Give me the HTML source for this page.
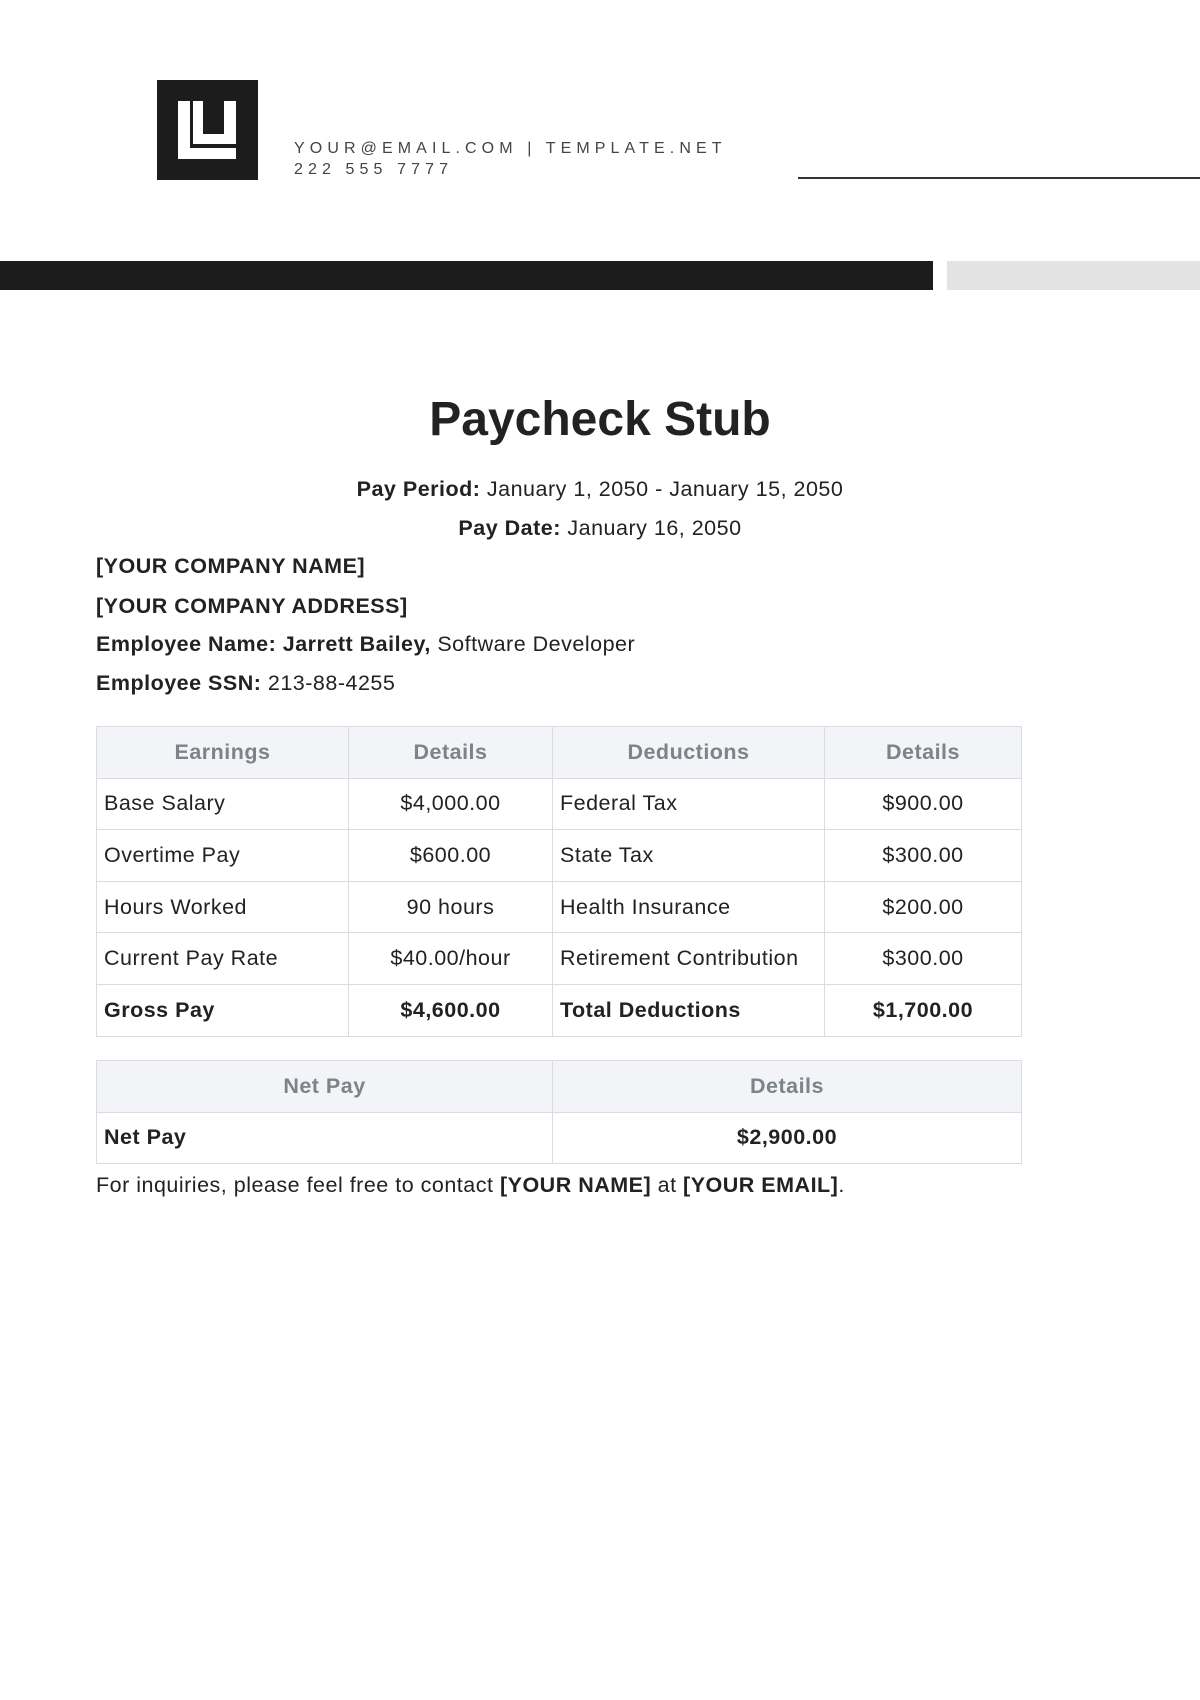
<!DOCTYPE html>
<html><head><meta charset="utf-8"><style>
*{margin:0;padding:0;box-sizing:border-box}
body{width:1200px;height:1700px;background:#fff;font-family:"Liberation Sans",sans-serif;color:#222;position:relative;overflow:hidden}
.abs{position:absolute}
.logo{left:157px;top:80px;width:101px;height:100px;background:#1c1c1c}
.contact{left:294px;top:138px;font-size:16px;letter-spacing:5.1px;color:#444;line-height:21px}
.hline{left:798px;top:177px;width:402px;height:1.5px;background:#333}
.bar1{left:0;top:261px;width:933px;height:29px;background:#1c1c1c}
.bar2{left:947px;top:261px;width:253px;height:29px;background:#e3e3e3}
h1{position:absolute;left:0;width:1200px;top:392px;text-align:center;font-size:48px;font-weight:bold;color:#222}
.c{position:absolute;left:0;width:1200px;text-align:center;font-size:21.5px;letter-spacing:0.5px}
.l{position:absolute;left:96px;font-size:21.5px;letter-spacing:0.5px}
table{position:absolute;left:96px;width:926px;border-collapse:collapse;font-size:21.5px;letter-spacing:0.5px}
td,th{border:1px solid #dcdcdc;height:51.6px;padding:0 7px}
th{background:#f3f4f8;color:#7c8389;font-weight:bold;text-align:center}
td.n{text-align:center}
</style></head><body>
<div class="abs logo"><svg width="101" height="100" viewBox="0 0 101 100"><path d="M21 21h12v47h46v11H21z" fill="#fff"/><path d="M36 21h10v33h21V21h12v43H36z" fill="#fff"/></svg></div>
<div class="abs contact">YOUR@EMAIL.COM | TEMPLATE.NET<br>222 555 7777</div>
<div class="abs hline"></div>
<div class="abs bar1"></div><div class="abs bar2"></div>
<h1>Paycheck Stub</h1>
<div class="c" style="top:477px"><b>Pay Period:</b> January 1, 2050 - January 15, 2050</div>
<div class="c" style="top:516px"><b>Pay Date:</b> January 16, 2050</div>
<div class="l" style="top:554px"><b>[YOUR COMPANY NAME]</b></div>
<div class="l" style="top:594px"><b>[YOUR COMPANY ADDRESS]</b></div>
<div class="l" style="top:632px"><b>Employee Name: Jarrett Bailey,</b> Software Developer</div>
<div class="l" style="top:671px"><b>Employee SSN:</b> 213-88-4255</div>
<table style="top:726px">
<colgroup><col style="width:252px"><col style="width:204px"><col style="width:272px"><col></colgroup>
<tr><th>Earnings</th><th>Details</th><th>Deductions</th><th>Details</th></tr>
<tr><td>Base Salary</td><td class="n">$4,000.00</td><td>Federal Tax</td><td class="n">$900.00</td></tr>
<tr><td>Overtime Pay</td><td class="n">$600.00</td><td>State Tax</td><td class="n">$300.00</td></tr>
<tr><td>Hours Worked</td><td class="n">90 hours</td><td>Health Insurance</td><td class="n">$200.00</td></tr>
<tr><td>Current Pay Rate</td><td class="n">$40.00/hour</td><td>Retirement Contribution</td><td class="n">$300.00</td></tr>
<tr><td><b>Gross Pay</b></td><td class="n"><b>$4,600.00</b></td><td><b>Total Deductions</b></td><td class="n"><b>$1,700.00</b></td></tr>
</table>
<table style="top:1060px">
<colgroup><col style="width:456px"><col></colgroup>
<tr><th>Net Pay</th><th>Details</th></tr>
<tr><td><b>Net Pay</b></td><td class="n"><b>$2,900.00</b></td></tr>
</table>
<div class="l" style="top:1173px">For inquiries, please feel free to contact <b>[YOUR NAME]</b> at <b>[YOUR EMAIL]</b>.</div>
</body></html>
